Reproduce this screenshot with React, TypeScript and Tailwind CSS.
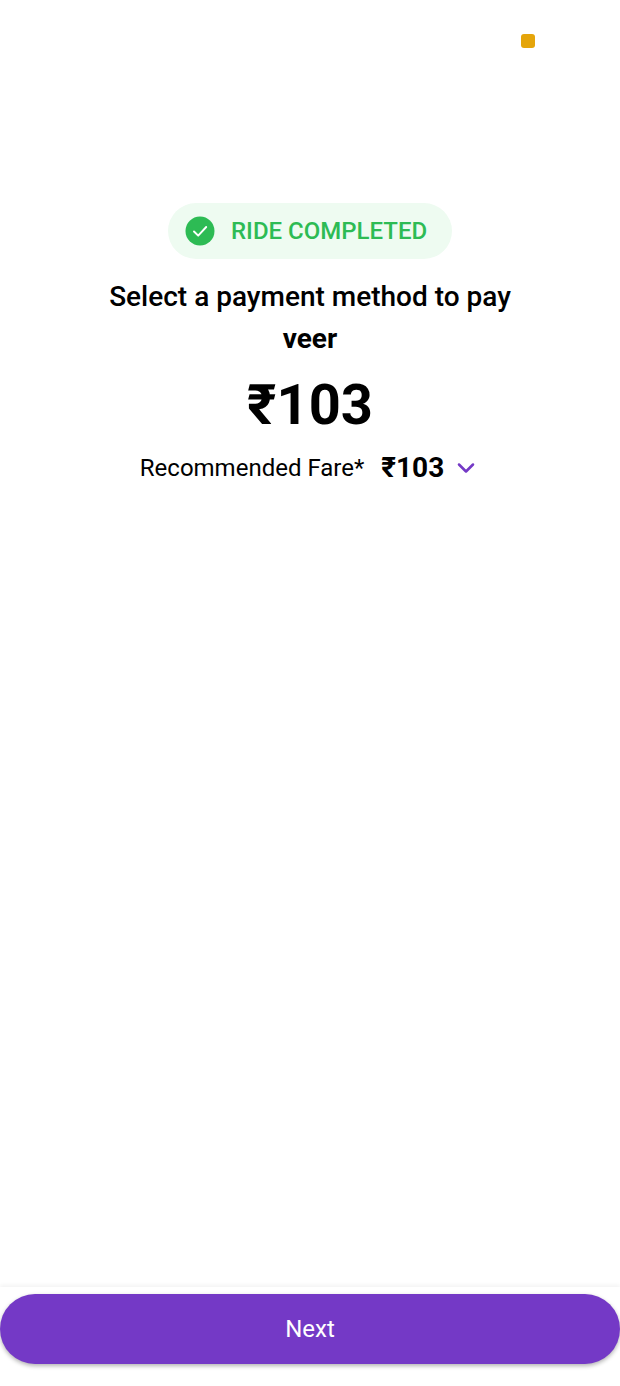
import { ChevronDown } from "lucide-react";

export default function App() {
  return (
    <div className="relative flex h-[1386px] w-[620px] flex-col bg-white font-['Roboto',sans-serif] text-black">
      {/* recording dot from the status bar */}
      <div className="absolute left-[521px] top-[34px] h-[14px] w-[14px] rounded-[3px] bg-[#e5a50a]" />

      <div className="flex flex-1 flex-col items-center pt-[203px]">
        <div className="flex h-[56px] w-[284px] items-center rounded-full bg-[#eefbf1] pl-[17px]">
          <svg viewBox="0 0 30 30" className="h-[30px] w-[30px]">
            <circle cx="15" cy="15" r="14.5" fill="#2dbb54" />
            <path d="M9 15.5l4.2 4.2L21.2 11" fill="none" stroke="#fff" strokeWidth="1.9" strokeLinecap="round" strokeLinejoin="round" />
          </svg>
          <span className="ml-[16px] text-[24px] font-medium leading-none text-[#2dbb54]">RIDE COMPLETED</span>
        </div>

        <h1 className="mt-[17px] w-[420px] text-center text-[28px] font-medium leading-[42px]">
          Select a payment method to pay <span className="font-bold">veer</span>
        </h1>

        <div className="mt-[12px] text-[56px] font-bold leading-[66px]">₹103</div>

        <div className="mt-[14px] flex items-center">
          <span className="text-[24px] leading-[32px]">Recommended Fare*</span>
          <span className="ml-[17px] text-[28px] font-bold leading-[32px]">₹103</span>
          <ChevronDown className="ml-[8px] h-[28px] w-[28px] text-[#7439c6]" strokeWidth={2.2} />
        </div>
      </div>

      <div className="h-[99px] shadow-[0_-2px_4px_rgba(0,0,0,0.05)] pt-[7px]">
        <button
          type="button"
          className="flex h-[70px] w-full items-center justify-center rounded-[35px] bg-[#7439c6] text-[24px] text-white shadow-[0_2px_4px_rgba(0,0,0,0.3)]"
        >
          Next
        </button>
      </div>
    </div>
  );
}
